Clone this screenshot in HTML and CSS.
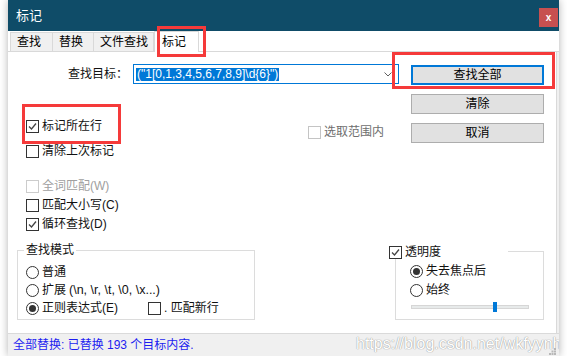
FILE: index.html
```html
<!DOCTYPE html>
<html lang="zh-CN">
<head>
  <meta charset="UTF-8" />
  <title>标记</title>
  <link rel="stylesheet" href="styles.css">
</head>
<body>
  <div class="window">
    <div class="titlebar">
      <span class="title">标记</span>
      <span class="close">x</span>
    </div>

    <div class="tabs">
      <span class="tab w42">查找</span>
      <span class="tab w41">替换</span>
      <span class="tab w60">文件查找</span>
      <span class="tab active">标记</span>
    </div>

    <div class="page">
      <div class="find-row">
        <label class="find-label">查找目标：</label>
        <div class="combo">
          <span class="sel">("1[0,1,3,4,5,6,7,8,9]\d{6}")</span>
          <svg class="arrow" width="8" height="5" viewBox="0 0 8 5"><polyline points="0.5,0.5 4,4 7.5,0.5" fill="none" stroke="#606060" stroke-width="1"/></svg>
        </div>
        <button class="btn primary">查找全部</button>
      </div>

      <div class="middle">
        <div class="opts">
          <div class="check"><span class="box"><svg width="11" height="11" viewBox="0 0 11 11"><polyline points="2,5.5 4.5,8 9,2.5" fill="none" stroke="#444" stroke-width="1.3"/></svg></span>标记所在行</div>
          <div class="check gap12"><span class="box"></span>清除上次标记</div>
          <div class="check gap22 disabled"><span class="box"></span>全词匹配(W)</div>
          <div class="check gap6"><span class="box"></span>匹配大小写(C)</div>
          <div class="check gap6"><span class="box"><svg width="11" height="11" viewBox="0 0 11 11"><polyline points="2,5.5 4.5,8 9,2.5" fill="none" stroke="#444" stroke-width="1.3"/></svg></span>循环查找(D)</div>
        </div>
        <div class="scope">
          <div class="check dim"><span class="box"></span>选取范围内</div>
        </div>
        <div class="btns">
          <button class="btn">清除</button>
          <button class="btn">取消</button>
        </div>
      </div>

      <div class="groups">
        <div class="group mode">
          <span class="legend">查找模式</span>
          <div class="radio first"><span class="dot"></span>普通</div>
          <div class="radio"><span class="dot"></span>扩展 <span class="latin">(\n, \r, \t, \0, \x...)</span></div>
          <div class="radio-row">
            <div class="radio on wide"><span class="dot"></span>正则表达式(E)</div>
            <div class="check"><span class="box"></span>.&nbsp;匹配新行</div>
          </div>
        </div>

        <div class="group trans">
          <div class="legend wide-legend">
            <div class="check"><span class="box"><svg width="11" height="11" viewBox="0 0 11 11"><polyline points="2,5.5 4.5,8 9,2.5" fill="none" stroke="#444" stroke-width="1.3"/></svg></span>透明度</div>
          </div>
          <div class="radio on first6"><span class="dot"></span>失去焦点后</div>
          <div class="radio gap6r"><span class="dot"></span>始终</div>
          <div class="slider">
            <div class="track"><span class="thumb"></span></div>
          </div>
        </div>
      </div>
    </div>

    <div class="status">
      <span class="status-text">全部替换: 已替换 193 个目标内容.</span>
      <span class="watermark">https://blog.csdn.net/wkfyynh</span>
      <svg class="grip" width="7" height="7" viewBox="0 0 7 7" fill="#b8b8b8">
        <rect x="5" y="0" width="2" height="2"/>
        <rect x="2.5" y="2.5" width="2" height="2"/><rect x="5" y="2.5" width="2" height="2"/>
        <rect x="0" y="5" width="2" height="2"/><rect x="2.5" y="5" width="2" height="2"/><rect x="5" y="5" width="2" height="2"/>
      </svg>
    </div>

    <!-- red annotation boxes -->
    <div class="mark mark-tab"></div>
    <div class="mark mark-line"></div>
    <div class="mark mark-find"></div>
  </div>
</body>
</html>
```

FILE: styles.css
```css
body {
  margin: 0;
  background: #fff;
  font-family: "Liberation Sans", "Noto Sans CJK SC", sans-serif;
  font-size: 12px;
  color: #111;
}
.window {
  position: relative;
  width: 551px;
  height: 356px;
  margin-left: 8px;
  background: #f0f0f0;
  box-shadow: 0 0 8px rgba(0,0,0,0.3);
  display: flex;
  flex-direction: column;
}
.titlebar {
  height: 31px;
  background: #0f4c68;
  color: #fff;
  display: flex;
  align-items: flex-start;
  padding-left: 8px;
  font-size: 13px;
}
.title {
  line-height: 31px;
}
.close {
  margin-left: auto;
  margin-right: 1px;
  margin-top: 8px;
  width: 19px;
  height: 19px;
  background: #c75050;
  color: #fff;
  font: bold 10px "Liberation Sans", sans-serif;
  display: flex;
  align-items: center;
  justify-content: center;
}
.tabs {
  height: 20px;
  background: #fff;
  border-bottom: 1px solid #d9d9d9;
  display: flex;
  align-items: flex-end;
  padding-left: 2px;
}
.tab {
  height: 19px;
  box-sizing: border-box;
  border: 1px solid #d9d9d9;
  border-bottom: none;
  background: #f0f0f0;
  line-height: 18px;
  padding-left: 6px;
  color: #000;
}
.tab + .tab {
  margin-left: -1px;
}
.w42 { width: 43px; }
.w41 { width: 42px; }
.w60 { width: 61px; }
.tab.active {
  width: 45px;
  height: 21px;
  margin-bottom: -1px;
  margin-left: 0;
  background: #fff;
  padding-left: 7px;
  line-height: 20px;
  position: relative;
}
.page {
  flex: 1;
  background: #fff;
  border-right: 1px solid #d9d9d9;
  margin-right: 2px;
  padding-right: 12px;
}
.find-row {
  display: flex;
  align-items: flex-start;
  margin-top: 12px;
  height: 21px;
}
.find-label {
  width: 120px;
  text-align: right;
  line-height: 20px;
}
.combo {
  margin-left: 5px;
  width: 266px;
  height: 20px;
  box-sizing: border-box;
  border: 1px solid #0078d7;
  display: flex;
  align-items: center;
  padding: 0 6px 0 2px;
}
.sel {
  background: #0078d7;
  color: #fff;
  line-height: 13px;
  padding: 0 1px;
  white-space: nowrap;
}
.arrow {
  margin-left: auto;
}
.btn {
  width: 133px;
  height: 20px;
  box-sizing: border-box;
  border: 1px solid #adadad;
  background: #e1e1e1;
  font: inherit;
  color: #000;
  padding: 0;
  line-height: 18px;
}
.btn.primary {
  margin-left: auto;
  margin-top: 1px;
  border: 2px solid #0078d7;
  line-height: 16px;
}
.middle {
  display: flex;
  align-items: flex-start;
  height: 146px;
}
.opts {
  margin-left: 18px;
  width: 282px;
  margin-top: 35px;
  display: flex;
  flex-direction: column;
}
.check {
  display: flex;
  align-items: center;
  height: 13px;
  line-height: 13px;
  white-space: nowrap;
}
.box {
  width: 13px;
  height: 13px;
  box-sizing: border-box;
  border: 1px solid #333;
  background: #fff;
  margin-right: 3px;
  flex: none;
  display: flex;
}
.gap12 { margin-top: 12px; }
.gap22 { margin-top: 22px; }
.gap6 { margin-top: 6px; }
.disabled { color: #a0a0a0; }
.disabled .box { border-color: #cccccc; }
.dim { color: #6e6e6e; }
.dim .box { border-color: #c4c4c4; }
.scope {
  margin-top: 41px;
}
.btns {
  margin-left: auto;
  margin-top: 9px;
  display: flex;
  flex-direction: column;
  gap: 9px;
}
.groups {
  display: flex;
  align-items: flex-start;
  margin-top: 19px;
}
.group {
  box-sizing: border-box;
  border: 1px solid #dcdcdc;
  display: flex;
  flex-direction: column;
  align-items: flex-start;
}
.mode {
  margin-left: 9px;
  width: 238px;
  height: 70px;
  padding-left: 8px;
}
.legend {
  margin-top: -7px;
  margin-left: -2px;
  padding: 0 2px;
  height: 13px;
  line-height: 13px;
  background: #fff;
}
.radio {
  display: flex;
  align-items: center;
  height: 13px;
  line-height: 13px;
  margin-top: 5px;
  white-space: nowrap;
}
.radio.first { margin-top: 9px; }
.dot {
  width: 13px;
  height: 13px;
  box-sizing: border-box;
  border: 1px solid #333;
  border-radius: 50%;
  margin-right: 3px;
  display: flex;
  align-items: center;
  justify-content: center;
  flex: none;
}
.radio.on .dot::after {
  content: "";
  width: 7px;
  height: 7px;
  border-radius: 50%;
  background: #333;
}
.latin {
  font-size: 12.5px;
  margin-left: 3px;
}
.radio-row {
  display: flex;
  align-items: center;
  margin-top: 5px;
}
.radio-row .radio {
  margin-top: 0;
}
.radio.wide {
  width: 122px;
}
.trans {
  margin-left: auto;
  margin-top: 1px;
  width: 149px;
  height: 69px;
  padding-left: 14px;
}
.wide-legend {
  margin-top: -6px;
  margin-left: -21px;
  width: 119px;
  padding: 0;
}
.radio.first6 { margin-top: 6px; }
.radio.gap6r { margin-top: 6px; }
.slider {
  margin-top: 5px;
  height: 10px;
  display: flex;
  align-items: center;
}
.track {
  position: relative;
  margin-left: 1px;
  width: 118px;
  height: 4px;
  box-sizing: border-box;
  background: #e7eaea;
  border: 1px solid #d6d6d6;
}
.thumb {
  position: absolute;
  left: 81px;
  top: -4px;
  width: 4px;
  height: 10px;
  background: #0078d7;
}
.status {
  position: relative;
  height: 22px;
  border-top: 1px solid #dadada;
  background: #f0f0f0;
  overflow: hidden;
  padding-left: 5px;
}
.status-text {
  line-height: 22px;
  color: #1d1df0;
}
.watermark {
  position: absolute;
  left: 348px;
  top: 2px;
  font: 16px/16px "Liberation Sans", sans-serif;
  color: #fff;
  text-shadow: 0 0 1px #9a9a9a, 0 0 1px #9a9a9a;
  white-space: nowrap;
}
.grip {
  position: absolute;
  right: 3px;
  bottom: 1px;
}
.mark {
  position: absolute;
  box-sizing: border-box;
  border: 3px solid #f53a3a;
  z-index: 2;
}
.mark-tab {
  left: 149px;
  top: 26px;
  width: 49px;
  height: 31px;
}
.mark-line {
  left: 14px;
  top: 104px;
  width: 99px;
  height: 40px;
}
.mark-find {
  left: 384px;
  top: 52px;
  width: 163px;
  height: 37px;
}
```
